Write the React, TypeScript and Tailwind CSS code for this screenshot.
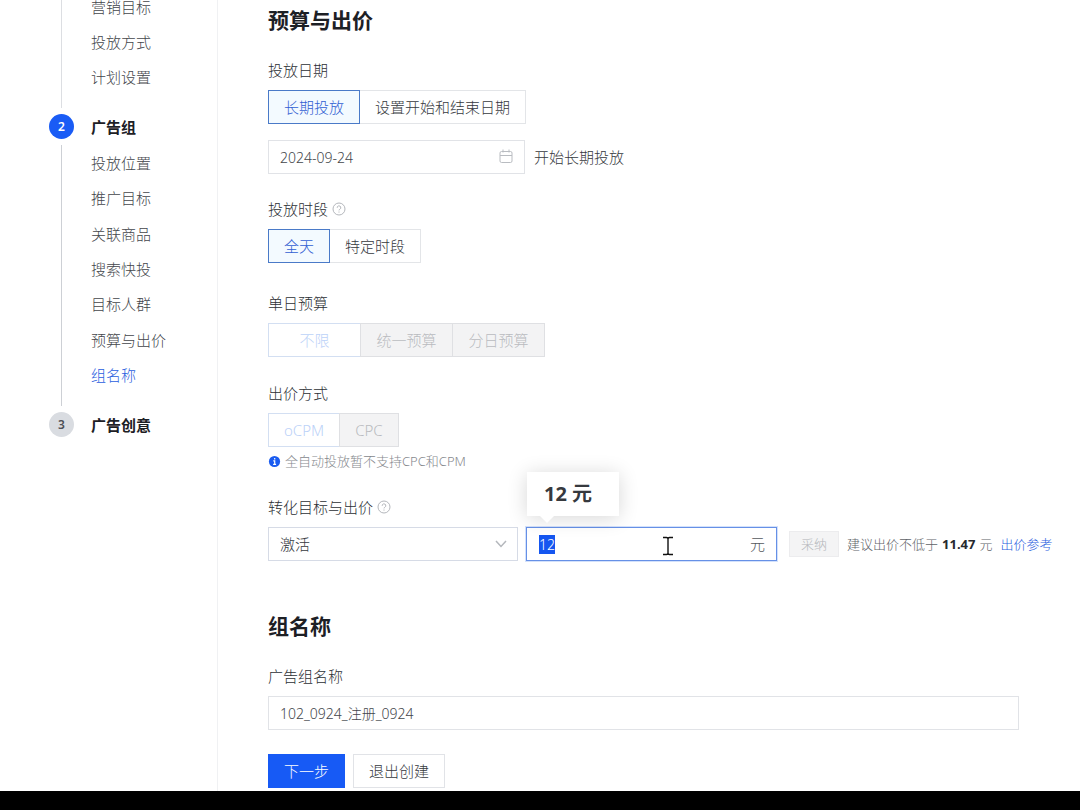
import { useEffect, useRef } from 'react';
import type { ReactNode } from 'react';

function Segments({ options, disabled = false, minWidth = '' }: { options: string[]; disabled?: boolean; minWidth?: string }) {
  return (
    <div className="flex" role="group">
      {options.map((option, i) => {
        const active = i === 0;
        const look = disabled
          ? active
            ? 'border-[#d3dff2] bg-white text-[#bcd2f8]'
            : 'border-[#dfe0e3] bg-[#f3f3f4] text-[#b9bbbf]'
          : active
            ? 'z-10 border-[#4a7ac8] bg-[#f3faff] text-[#3160d2]'
            : 'border-[#e3e5e8] bg-white text-[#36393e]';
        return (
          <button
            key={option}
            type="button"
            disabled={disabled}
            aria-pressed={active}
            className={`relative h-[34px] whitespace-nowrap border px-[15px] ${active ? '' : '-ml-px'} ${minWidth} ${look}`}
          >
            {option}
          </button>
        );
      })}
    </div>
  );
}

function HelpIcon() {
  return (
    <svg viewBox="0 0 14 14" className="h-[14px] w-[14px]" fill="none" stroke="#b4b7bc" aria-hidden="true">
      <circle cx="7" cy="7" r="6" />
      <path d="M5.200 5.800a1.800 1.800 0 1 1 2.700 1.400c-.6.4-.9.6-.9 1.200M7 9.500v1.100" />
    </svg>
  );
}

function Label({ children, htmlFor, help = false }: { children: ReactNode; htmlFor?: string; help?: boolean }) {
  return (
    <div className="mb-[9px] flex h-[22px] items-center gap-1 text-[#2c2f34]">
      {htmlFor ? <label htmlFor={htmlFor}>{children}</label> : <span>{children}</span>}
      {help && <HelpIcon />}
    </div>
  );
}

function NavList({ items, current, className }: { items: string[]; current?: string; className: string }) {
  return (
    <ul className={`flex flex-col leading-[14px] ${className}`}>
      {items.map((item) => (
        <li key={item} className="flex flex-1 items-center">
          <a href="#" className={item === current ? 'text-[#2a5ede]' : 'text-[#43464b]'}>
            {item}
          </a>
        </li>
      ))}
    </ul>
  );
}

function Sidebar() {
  return (
    <nav className="-mt-[11px] flex w-[218px] shrink-0 flex-col gap-[6px] border-r border-[#f0f1f3] pl-[49px]">
      <div className="flex gap-[17px]">
        <div className="flex w-[25px] justify-center">
          <div className="w-px bg-[#dcdee2]" />
        </div>
        <NavList items={['营销目标', '投放方式', '计划设置']} className="mb-[13px] h-[106px]" />
      </div>
      <div className="flex gap-[17px]">
        <div className="flex w-[25px] flex-col items-center gap-[6px]">
          <span className="flex h-[25px] w-[25px] items-center justify-center rounded-full bg-[#1a5cf5] text-[12px] font-semibold text-white">2</span>
          <div className="w-px flex-1 bg-[#cdd0d5]" />
        </div>
        <div>
          <div className="flex h-[25px] items-center font-bold text-[#1d2025]">广告组</div>
          <NavList
            items={['投放位置', '推广目标', '关联商品', '搜索快投', '目标人群', '预算与出价', '组名称']}
            current="组名称"
            className="mb-[13px] mt-[6px] h-[248px]"
          />
        </div>
      </div>
      <div className="flex gap-[17px]">
        <span className="flex h-[25px] w-[25px] items-center justify-center rounded-full bg-[#d9dce1] text-[12px] font-semibold text-[#4d5056]">3</span>
        <div className="flex h-[25px] items-center font-bold text-[#1d2025]">广告创意</div>
      </div>
    </nav>
  );
}

function BidField() {
  const input = useRef<HTMLInputElement>(null);
  useEffect(() => {
    input.current?.focus();
    input.current?.select();
  }, []);

  return (
    <div className="relative w-[251px] shrink-0">
      <input
        ref={input}
        aria-label="出价"
        defaultValue="12"
        className="block h-[34px] w-full border border-[#6690e6] bg-white pl-3 pr-9 text-[14px] leading-6 text-[#3c3f44] shadow-[0_0_0_1px_#d3e1fb] outline-none selection:bg-[#1556f0] selection:text-white"
      />
      <span className="absolute inset-y-0 right-3 flex items-center text-[#55585d]">元</span>
      <div
        role="tooltip"
        className="absolute bottom-[45px] left-px flex h-[44px] w-[92px] items-center bg-white px-[17px] text-[20px] font-bold text-[#36393e] shadow-[0_2px_20px_rgba(0,0,0,0.16)]"
      >
        12 元
        <svg viewBox="0 0 14 7" className="absolute left-[13px] top-full h-[7px] w-[14px]" aria-hidden="true">
          <path d="M0 0h14L7 7z" fill="#fff" />
        </svg>
      </div>
      <svg viewBox="0 0 12 20" className="absolute left-[136px] top-[9px] h-5 w-3" fill="none" aria-hidden="true">
        <path d="M1 1.5h3.500q1.500 0 1.500 1.500q0-1.500 1.500-1.500H11M6 2.500v15M1 18.500h3.500q1.500 0 1.500-1.500q0 1.500 1.500 1.500H11" stroke="#111" strokeWidth="1.4" />
      </svg>
    </div>
  );
}

export default function App() {
  return (
    <div className="flex min-h-screen flex-col overflow-hidden bg-white font-['Noto_Sans','Noto_Sans_CJK_SC',sans-serif] text-[15px] font-light leading-[22px]">
      <div className="flex flex-1">
        <Sidebar />
        <main className="min-w-0 flex-1 pb-[3px] pl-[50px] pr-[30px] pt-[6px]">
          <section>
            <h2 className="mb-[25px] text-[21px] font-bold leading-7 text-[#1d2025]">预算与出价</h2>

            <Label htmlFor="start-date">投放日期</Label>
            <Segments options={['长期投放', '设置开始和结束日期']} />
            <div className="mt-4 flex items-center gap-[9px]">
              <div className="relative w-[257px]">
                <input
                  id="start-date"
                  defaultValue="2024-09-24"
                  className="block h-[34px] w-full border border-[#e1e3e7] bg-white px-[11px] text-[14px] text-[#43464b] outline-none"
                />
                <svg viewBox="0 0 14 14" className="absolute right-3 top-[9px] h-[14px] w-[14px]" fill="none" stroke="#b9bcc1" aria-hidden="true">
                  <rect x="1" y="2.500" width="12" height="11" rx="1.500" />
                  <path d="M1 6.500h12M4 .5v3M10 .5v3" />
                </svg>
              </div>
              <span className="text-[#36393e]">开始长期投放</span>
            </div>

            <div className="mt-6">
              <Label help>投放时段</Label>
              <Segments options={['全天', '特定时段']} />
            </div>

            <div className="mt-[29px]">
              <Label>单日预算</Label>
              <Segments options={['不限', '统一预算', '分日预算']} disabled minWidth="min-w-[93px]" />
            </div>

            <div className="mt-[25px]">
              <Label>出价方式</Label>
              <Segments options={['oCPM', 'CPC']} disabled />
              <p className="mt-1 flex h-5 items-center gap-1 text-[13px] text-[#85888d]">
                <svg viewBox="0 0 13 13" className="h-[13px] w-[13px]" aria-hidden="true">
                  <circle cx="6.500" cy="6.500" r="5.600" fill="#1a5cf0" />
                  <path d="M6.700 3v1.500M5.300 5.900h1.400v3.400M5.100 9.400h3" stroke="#fff" strokeWidth="1.200" fill="none" />
                </svg>
                全自动投放暂不支持CPC和CPM
              </p>
            </div>

            <div className="mt-[25px]">
              <Label htmlFor="goal" help>转化目标与出价</Label>
              <div className="flex items-center whitespace-nowrap">
                <div className="relative mr-2 w-[250px] shrink-0">
                  <select id="goal" className="block h-[34px] w-full appearance-none border border-[#d6dbe6] bg-white px-[11px] text-[#36393e] outline-none">
                    <option>激活</option>
                  </select>
                  <svg viewBox="0 0 12 8" className="pointer-events-none absolute right-[11px] top-[13px] h-2 w-3" fill="none" stroke="#b4b7bc" strokeWidth="1.500" aria-hidden="true">
                    <path d="M1 1l5 5.500L11 1" />
                  </svg>
                </div>
                <BidField />
                <button type="button" disabled className="ml-3 h-[26px] w-[50px] shrink-0 border border-[#ececee] bg-[#f4f4f5] text-[13px] text-[#b3b5b9]">
                  采纳
                </button>
                <div className="ml-2 flex gap-1 text-[13px] text-[#606368]">
                  <span>建议出价不低于</span>
                  <strong className="font-bold text-[#26292e]">11.47</strong>
                  <span>元</span>
                  <a href="#" className="ml-1 text-[#2a5ede]">出价参考</a>
                </div>
              </div>
            </div>
          </section>

          <section className="mt-[51px]">
            <h2 className="mb-[25px] text-[21px] font-bold leading-7 text-[#1d2025]">组名称</h2>
            <Label htmlFor="group-name">广告组名称</Label>
            <input
              id="group-name"
              defaultValue="102_0924_注册_0924"
              className="block h-[34px] w-full max-w-[751px] border border-[#e1e3e7] bg-white px-[11px] text-[14px] text-[#43464b] outline-none"
            />
            <div className="mt-6 flex gap-2">
              <button type="button" className="h-[34px] border border-[#175af5] bg-[#175af5] px-[15px] text-white">下一步</button>
              <button type="button" className="h-[34px] border border-[#e1e3e7] bg-white px-[15px] text-[#36393e]">退出创建</button>
            </div>
          </section>
        </main>
      </div>
      <div className="h-[19px] bg-black" />
    </div>
  );
}
